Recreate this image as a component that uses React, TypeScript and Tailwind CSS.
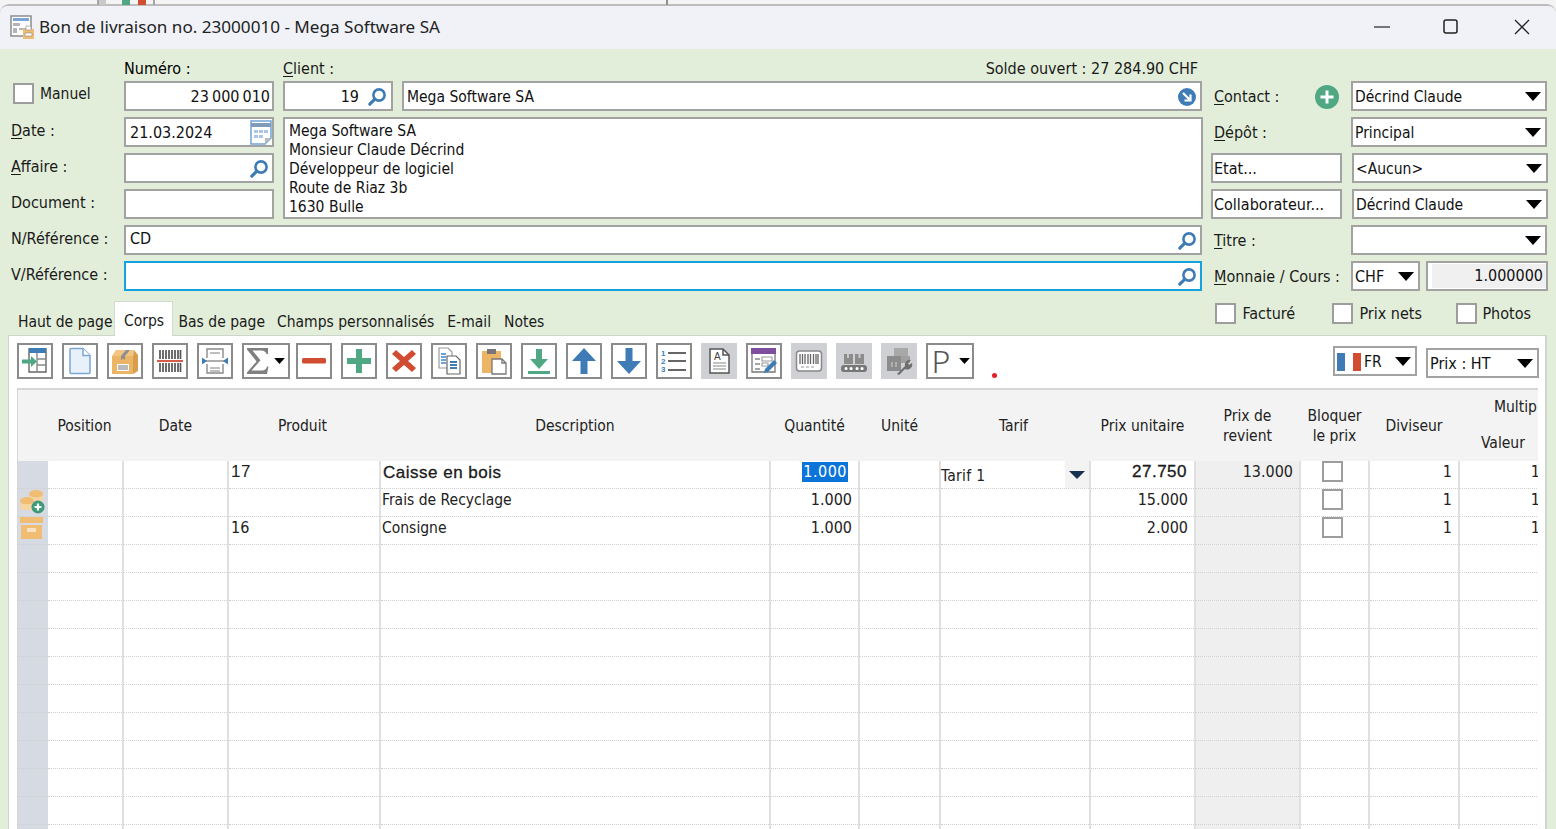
import React from 'react';

const FONT = "font-['DejaVu_Sans',sans-serif] [font-stretch:condensed]";
const PLAIN_BIG = "font-['Liberation_Sans',sans-serif] text-[17px] tracking-[0.5px]";
const STRONG = "font-['Liberation_Sans',sans-serif] text-[17px] font-medium tracking-[0.5px] [-webkit-text-stroke:0.3px_#111]";

const COLS = [75, 105, 152, 390, 89, 81, 150, 105, 105, 69, 90, 82];

// little search glass used in several fields
function Glass() {
  return (
    <svg width="20" height="20" viewBox="0 0 20 20" fill="none">
      <circle cx="12" cy="8" r="5.6" stroke="#3f7cb5" strokeWidth="2.6" fill="#fff" />
      <path d="M7.6 12.4 2.8 17.2" stroke="#3f7cb5" strokeWidth="3.2" strokeLinecap="round" />
    </svg>
  );
}

function Caret({ className = '' }: { className?: string }) {
  return (
    <svg width="16" height="9" viewBox="0 0 16 9" className={className}>
      <path d="M0 0h16L8 9z" fill="#000" />
    </svg>
  );
}

function Box({ children, className = '', focus }: { children?: React.ReactNode; className?: string; focus?: boolean }) {
  return (
    <div className={`flex h-[30px] items-center border-2 bg-white px-[4px] pt-px text-[#111] ${focus ? 'border-[#15a3e0]' : 'border-[#a2a2a2]'} ${className}`}>
      {children}
    </div>
  );
}

function Select({ value, className = '', size = 'text-[15.5px]' }: { value?: string; className?: string; size?: string }) {
  return (
    <Box className={`justify-between pl-[2px] pr-[4px] ${className}`}>
      <span className={size}>{value}</span>
      <Caret />
    </Box>
  );
}

function Label({ first, rest, className = '' }: { first?: string; rest: string; className?: string }) {
  return (
    <span className={`whitespace-nowrap text-[#1a1a1a] ${className}`}>
      {first && <u className="underline-offset-2">{first}</u>}
      {rest}
    </span>
  );
}

function Check({ label, className = '', labelClass = '' }: { label?: string; className?: string; labelClass?: string }) {
  return (
    <span className={`flex items-center gap-[5px] ${className}`}>
      <span className="h-[21px] w-[21px] shrink-0 border-2 border-[#9d9d9d] bg-white" />
      {label && <span className={`text-[#1a1a1a] ${labelClass}`}>{label}</span>}
    </span>
  );
}

function Tool({ children, wide, flat }: { children: React.ReactNode; wide?: boolean; flat?: boolean }) {
  return (
    <div
      className={`flex h-[36px] shrink-0 items-center justify-center ${wide ? 'w-[48px]' : 'w-[36px]'} ${
        flat ? 'bg-[#cfd0d3]' : 'border-2 border-[#8b8b8b] bg-white'
      }`}
    >
      {children}
    </div>
  );
}

function Ico({ children }: { children: React.ReactNode }) {
  return (
    <svg width="28" height="28" viewBox="0 0 28 28" fill="none">
      {children}
    </svg>
  );
}

function Toolbar() {
  return (
    <div className="flex items-start gap-[9px]">
      <Tool>
        <Ico>
          <path d="M8 2h17v23H8z" fill="#fff" stroke="#666" strokeWidth="1.4" />
          <path d="M8 1h17v5H8z" fill="#3f7cb5" />
          <path d="M16 6v19M16 12h9M16 18h9" stroke="#888" strokeWidth="1.4" />
          <path d="M1 12.5h9V9l6 5.5-6 5.5v-3.500H1z" fill="#4fa883" />
        </Ico>
      </Tool>
      <Tool>
        <Ico>
          <path d="M5 1.500h12l7 7v17a1 1 0 0 1-1 1H5a1 1 0 0 1-1-1v-23a1 1 0 0 1 1-1z" fill="#e8f0f9" stroke="#7ba6d3" strokeWidth="1.500" />
          <path d="M17 1.500v7h7" stroke="#7ba6d3" strokeWidth="1.500" fill="#fff" />
        </Ico>
      </Tool>
      <Tool>
        <Ico>
          <path d="M1 9 5 3h18l-1 6z" fill="#f2c583" />
          <path d="M22 9l1-6 4 5v16l-5 3z" fill="#d89d4d" />
          <path d="M1 9h21v18H1z" fill="#ecb566" />
          <path d="M10 9l5-6h4l-5 6v4l-2-1.500L10 13z" fill="#8f8f8f" />
          <path d="M6 17h12v7H6z" fill="#fff" />
          <path d="M8 18v5M10 18v5M12 18v5M14 18v5M16 18v5" stroke="#777" strokeWidth="1" />
        </Ico>
      </Tool>
      <Tool>
        <Ico>
          <path d="M4 3v22M7 3v22M10 3v22M13 3v22M16 3v22M19 3v22M22 3v22M24.500 3v22" stroke="#555" strokeWidth="1.700" />
          <path d="M1 14h26" stroke="#fff" strokeWidth="4" />
          <path d="M1 14h26" stroke="#d14d32" strokeWidth="1.800" />
        </Ico>
      </Tool>
      <Tool>
        <Ico>
          <path d="M6 11V2h16v9M6 17v9h16v-9" stroke="#8a8a8a" strokeWidth="1.400" />
          <path d="M9 6h10M9 21h10M9 24h10" stroke="#aaa" strokeWidth="1.400" />
          <path d="M3 14h22" stroke="#8a8a8a" strokeWidth="1.400" />
          <path d="M1 10.500 6 14l-5 3.500zM27 10.500 22 14l5 3.500z" fill="#3f7cb5" />
        </Ico>
      </Tool>
      <div className="mr-[-3px]">
        <Tool wide>
          <div className="flex items-center gap-[5px]">
            <svg width="22" height="26" viewBox="0 0 22 26">
              <path d="M0 0h21v6h-1.500Q18.500 2.500 14 2.500H5.500l8 9.800-9 10.200H15q4 0 5-4h1.500L20 26H0v-1.500l9.500-11L0 1.500z" fill="#808080" />
            </svg>
            <Caret className="h-[6px] w-[11px]" />
          </div>
        </Tool>
      </div>
      <Tool>
        <Ico>
          <rect x="2" y="11" width="24" height="5.500" rx="1.500" fill="#d14d32" />
        </Ico>
      </Tool>
      <Tool>
        <Ico>
          <path d="M11 2h6v9h9v6h-9v9h-6v-9H2v-6h9z" fill="#4fa883" strokeLinejoin="round" />
        </Ico>
      </Tool>
      <Tool>
        <Ico>
          <path d="M6 3l8 7 8-7 4 4-8 7 8 7-4 4-8-7-8 7-4-4 8-7-8-7z" fill="#d14d32" />
        </Ico>
      </Tool>
      <Tool>
        <Ico>
          <path d="M4 1h9l4 4v16H4z" fill="#fff" stroke="#999" strokeWidth="1.200" />
          <path d="M6 7h5M6 10h5M6 13h5M6 16h5" stroke="#6fa3d6" strokeWidth="1.800" />
          <path d="M12 9h9l4 4v14H12z" fill="#fff" stroke="#666" strokeWidth="1.200" />
          <path d="M15 15h7M15 18h7M15 21h7" stroke="#3f7cb5" strokeWidth="1.800" />
        </Ico>
      </Tool>
      <Tool>
        <Ico>
          <path d="M2 4h19v22H2z" fill="#ecb566" />
          <path d="M7 2h9v5H7z" fill="#777" />
          <path d="M12 12h10l4 4v11H12z" fill="#fff" stroke="#777" strokeWidth="1.300" />
          <path d="M22 12v4h4" stroke="#777" strokeWidth="1.300" />
        </Ico>
      </Tool>
      <Tool>
        <Ico>
          <path d="M11 2h6v10h6l-9 10-9-10h6z" fill="#4fa883" />
          <path d="M3 24h22v3H3z" fill="#4fa883" />
        </Ico>
      </Tool>
      <Tool>
        <Ico>
          <path d="M14 1l12 13h-8.500v13h-7V14H2z" fill="#3f7cb5" />
        </Ico>
      </Tool>
      <Tool>
        <Ico>
          <path d="M14 27 2 14h8.500V1h7v13H26z" fill="#3f7cb5" />
        </Ico>
      </Tool>
      <Tool>
        <Ico>
          <text x="1" y="9" fontSize="8" fontWeight="700" fill="#3f7cb5" fontFamily="Liberation Sans, sans-serif">1</text>
          <text x="1" y="17" fontSize="8" fontWeight="700" fill="#3f7cb5" fontFamily="Liberation Sans, sans-serif">2</text>
          <text x="1" y="25" fontSize="8" fontWeight="700" fill="#3f7cb5" fontFamily="Liberation Sans, sans-serif">3</text>
          <path d="M8 6h18M8 14h18M8 23h18" stroke="#666" strokeWidth="1.800" />
        </Ico>
      </Tool>
      <Tool flat>
        <Ico>
          <path d="M5 2h13l6 6v18H5z" fill="#fff" stroke="#555" strokeWidth="1.500" />
          <path d="M18 2v6h6" stroke="#555" strokeWidth="1.500" />
          <text x="9" y="13" fontSize="10" fill="#444" fontFamily="Liberation Sans, sans-serif">A</text>
          <path d="M8 16h13M8 19h13M8 22h13" stroke="#888" strokeWidth="1.100" />
        </Ico>
      </Tool>
      <Tool>
        <Ico>
          <path d="M2 2h23v23H2z" fill="#fff" stroke="#777" strokeWidth="1.300" />
          <path d="M1 1h25v6H1z" fill="#7f4d9e" />
          <path d="M5 12h5M5 17h5M5 22h5" stroke="#888" strokeWidth="1.400" />
          <path d="M12 10h10v4H12zM12 16h6v3h-6z" stroke="#999" strokeWidth="1.100" />
          <path d="M14 26l1-4 9-9 3 3-9 9z" fill="#3f7cb5" />
        </Ico>
      </Tool>
      <Tool flat>
        <Ico>
          <rect x="1.500" y="4" width="25" height="20" rx="3" fill="#fff" stroke="#888" strokeWidth="1.500" />
          <path d="M5 7v10M7.500 7v10M10 7v10M13 7v10M15.500 7v10M18.500 7v10M21 7v10M23 7v10" stroke="#666" strokeWidth="1.300" />
          <path d="M6 20h3M11 20h3M16 20h3" stroke="#999" strokeWidth="1.200" />
        </Ico>
      </Tool>
      <Tool flat>
        <Ico>
          <path d="M4 7h9v10H4zM15 7h9v10h-9z" fill="#8c8c8c" />
          <path d="M7 7h2v4H7zM18.500 7h2v4h-2z" fill="#c9c9c9" />
          <rect x="1" y="18" width="26" height="7" rx="3" fill="#777" />
          <path d="M6 21.500h.1M11 21.500h.1M17 21.500h.1M22 21.500h.1" stroke="#fff" strokeWidth="3" strokeLinecap="round" />
        </Ico>
      </Tool>
      <Tool flat>
        <Ico>
          <path d="M9 1h14v10H9z" fill="#a8a8a8" />
          <path d="M2 9h14v15H2z" fill="#8c8c8c" />
          <path d="M16 9h9v7H16z" fill="#a0a0a0" />
          <path d="M7 15v5M11 15v5" stroke="#c9c9c9" strokeWidth="1.200" />
          <path d="M12 27l8-8a5 5 0 0 1 6-6l-3 3 1 2 3-2a5 5 0 0 1-7 6l-6 6z" fill="#6e6e6e" />
        </Ico>
      </Tool>
      <Tool wide>
        <div className="flex items-center gap-[9px] pl-[2px]">
          <span className="font-['Noto_Sans',sans-serif] text-[32px] leading-none font-light text-[#555]">P</span>
          <Caret className="h-[6px] w-[11px]" />
        </div>
      </Tool>
    </div>
  );
}

const ROWS = [
  { produit: '17', desc: 'Caisse en bois', qty: '1.000', prix: '27.750', revient: '13.000', main: true },
  { produit: '', desc: 'Frais de Recyclage', qty: '1.000', prix: '15.000', icon: 'coins' },
  { produit: '16', desc: 'Consigne', qty: '1.000', prix: '2.000', icon: 'box' },
];

function Coins() {
  return (
    <svg width="26" height="26" viewBox="0 0 26 26">
      <ellipse cx="17" cy="5" rx="7" ry="4" fill="#f0bd72" />
      <path d="M10 6v5c0 2 14 2 14 0V6c0 3-14 3-14 0z" fill="#f4d5a3" />
      <ellipse cx="8" cy="12" rx="7" ry="4" fill="#f0bd72" />
      <path d="M1 13v6c0 3 14 3 14 0v-6c0 3-14 3-14 0z" fill="#f4d5a3" />
      <circle cx="19" cy="18" r="6.500" fill="#3f9a78" />
      <path d="M19 14.500v7M15.500 18h7" stroke="#fff" strokeWidth="2.200" />
    </svg>
  );
}

function Carton() {
  return (
    <svg width="24" height="22" viewBox="0 0 24 22">
      <path d="M0 0h23v6H0z" fill="#f0bd72" />
      <path d="M1 8h21v14H1z" fill="#f0bd72" />
      <path d="M7 11h9v4H7z" fill="#f7e3c4" />
    </svg>
  );
}

function Grid() {
  const blanks = Array.from({ length: 11 });
  return (
    <div className="mt-[9px] ml-[8px] h-[442px] w-[1521px] overflow-hidden border-t-2 border-l border-[#d6d6d6] bg-white">
      <table className="w-[1523px] table-fixed border-collapse text-[15.5px] text-[#222]">
        <colgroup>
          <col className="w-[30px]" />
          {COLS.map((w, i) => (
            <col key={i} style={{ width: w }} />
          ))}
        </colgroup>
        <thead>
          <tr className="h-[71px] bg-[#f3f3f3] text-center align-middle font-normal">
            <th className="font-normal" />
            <th className="pr-[2px] font-normal">Position</th>
            <th className="font-normal">Date</th>
            <th className="pr-[3px] font-normal">Produit</th>
            <th className="font-normal">Description</th>
            <th className="font-normal">Quantité</th>
            <th className="font-normal">Unité</th>
            <th className="pr-[3px] font-normal">Tarif</th>
            <th className="font-normal">Prix unitaire</th>
            <th className="font-normal leading-[20px]">Prix de<br />revient</th>
            <th className="font-normal leading-[20px]">Bloquer<br />le prix</th>
            <th className="font-normal">Diviseur</th>
            <th className="pl-[22px] text-left align-top font-normal">
              <div className="mt-[7px] pl-[13px] leading-[20px]">Multip</div>
              <div className="mt-[16px] leading-[20px]">Valeur</div>
            </th>
          </tr>
        </thead>
        <tbody>
          {ROWS.map((r) => (
            <tr key={r.desc} className={`${r.main ? 'h-[27px]' : 'h-[28px]'} border-b border-dotted border-[#cfcfcf] align-top`}>
              <td className="bg-[#d6dbe3] p-0">
                <div className="flex justify-center pr-[3px]">
                  {r.icon === 'coins' && <Coins />}
                  {r.icon === 'box' && <Carton />}
                </div>
              </td>
              <td className="border-r-2 border-[#e0e0e0]" />
              <td className="border-r-2 border-[#e0e0e0]" />
              <td className={`border-r-2 border-[#e0e0e0] pt-px pl-[2px] text-[16px] ${r.main ? PLAIN_BIG : ''}`}>{r.produit}</td>
              <td className={`border-r-2 border-[#e0e0e0] ${r.main ? `pt-[2px] pl-[2px] ${STRONG}` : 'pt-px pl-px'}`}>{r.desc}</td>
              <td className="border-r-2 border-[#e0e0e0] pt-px pr-[6px] text-right text-[16px]">
                {r.main ? <span className="mr-[4px] inline-block w-[46px] bg-[#0a74d8] pr-px tracking-[0.5px] text-white">{r.qty}</span> : r.qty}
              </td>
              <td className="border-r-2 border-[#e0e0e0]" />
              <td className="border-r-2 border-[#e0e0e0] p-0">
                {r.main && (
                  <div className="flex h-[27px] items-center justify-between pt-[3px] tracking-[0.3px]">
                    <span>Tarif 1</span>
                    <span className="-mt-[3px] flex h-[27px] w-[24px] items-center justify-center bg-[#f3f3f3]">
                      <svg width="16" height="8" viewBox="0 0 16 8"><path d="M0 0h16L8 8z" fill="#16304f" /></svg>
                    </span>
                  </div>
                )}
              </td>
              <td className={`border-r-2 border-[#e0e0e0] pt-px text-right text-[16px] ${r.main ? `pr-[7px] ${STRONG}` : 'pr-[6px]'}`}>{r.prix}</td>
              <td className="border-r-2 border-[#e0e0e0] bg-[#efefef] pt-px pr-[6px] text-right text-[16px]">{r.revient}</td>
              <td className="border-r-2 border-[#e0e0e0] p-0">
                <div className="flex justify-center pr-[5px]"><Check /></div>
              </td>
              <td className="border-r-2 border-[#e0e0e0] pt-px pr-[6px] text-right text-[16px]">1</td>
              <td className="pt-px pr-px text-right text-[16px]">1</td>
            </tr>
          ))}
          {blanks.map((_, i) => (
            <tr key={i} className="h-[28px] border-b border-dotted border-[#cfcfcf]">
              <td className="bg-[#d6dbe3]" />
              {COLS.map((w, j) => (
                <td key={j} className={`${j === 11 ? '' : 'border-r-2 border-[#e0e0e0]'} ${j === 8 ? 'bg-[#efefef]' : ''}`} />
              ))}
            </tr>
          ))}
        </tbody>
      </table>
    </div>
  );
}

export default function App() {
  return (
    <div className={`h-[829px] w-[1556px] overflow-hidden bg-[#f4f4f4] text-[16px] leading-[20px] ${FONT}`}>
      {/* bit of the window behind */}
      <div className="flex h-[5px] pl-[97px]">
        <div className="flex h-full w-[58px] items-stretch border-x-2 border-[#a5a5a5]">
          <span className="h-full w-[7px] bg-[#c9c9c9]" />
          <span className="ml-[16px] h-full w-[8px] bg-[#4fa883]" />
          <span className="ml-[8px] h-full w-[8px] bg-[#d14d32]" />
        </div>
        <div className="ml-[511px] h-full w-[2px] bg-[#8f8f8f]" />
      </div>

      <div className="-mt-px h-[825px] rounded-t-[9px] border-t-2 border-[#bdbdbd] bg-[#e2eed9]">
        {/* title bar */}
        <div className="flex h-[43px] items-center rounded-t-[8px] bg-[#f0f2f8] pl-[10px]">
          <svg width="25" height="25" viewBox="0 0 25 25">
            <path d="M1 1h20v20H1z" fill="#fff" stroke="#8c8c8c" strokeWidth="1.500" />
            <path d="M3 3h16v3H3z" fill="#7ba6d3" />
            <path d="M3 8h7v3H3zM3 13h4v5H3zM9 13h8v2H9z" fill="#b5b5b5" />
            <path d="M13 14h11v10H13z" fill="#f0bd72" />
            <path d="M16 11h5v4h-5zM15 18h7v3h-7z" fill="#fff" stroke="#888" strokeWidth=".6" />
          </svg>
          <span className="mb-[2px] ml-[4px] font-['Noto_Sans',sans-serif] text-[17.1px] [font-stretch:normal] text-[#222]">
            Bon de livraison no. 23000010 - Mega Software SA
          </span>
          <div className="ml-auto flex items-center">
            <svg width="16" height="2" viewBox="0 0 16 2" className="mr-[53px] mb-[2px]"><path d="M0 1h16" stroke="#222" strokeWidth="1.200" /></svg>
            <svg width="15" height="15" viewBox="0 0 15 15" className="mr-[56px] mb-[2px]"><rect x="1" y="1" width="13" height="13" rx="2" fill="none" stroke="#222" strokeWidth="1.500" /></svg>
            <svg width="16" height="16" viewBox="0 0 16 16" className="mr-[26px] mb-[2px]"><path d="M1 1l14 14M15 1 1 15" stroke="#222" strokeWidth="1.300" /></svg>
          </div>
        </div>

        {/* header form */}
        <div className="flex h-[32px] items-start pt-[9px] pl-[124px]">
          <span className="mt-px w-[159px]">Numéro :</span>
          <Label first="C" rest="lient :" className="mt-px" />
          <span className="mt-px mr-[358px] ml-auto text-[#1a1a1a]">Solde ouvert : 27 284.90 CHF</span>
        </div>
        <div className="grid grid-cols-[124px_150px_9px_110px_9px_800px_9px_131px_9px_196px] grid-rows-[repeat(6,30px)] gap-y-[6px]">
          <div className="col-start-1 row-start-1 pl-[13px]"><Check label="Manuel" className="mt-px gap-[6px]" labelClass="mt-[2px] text-[15.5px]" /></div>
          <Box className="col-start-2 row-start-1 justify-end pr-[2px] [word-spacing:-1.5px]">23 000 010</Box>
          <Box className="col-start-4 row-start-1 justify-between pr-[4px]">
            <span className="mr-[8px] ml-auto">19</span>
            <Glass />
          </Box>
          <Box className="col-start-6 row-start-1 justify-between pr-[4px] pl-[3px] text-[15.5px]">
            Mega Software SA
            <svg width="18" height="18" viewBox="0 0 18 18">
              <circle cx="9" cy="9" r="9" fill="#3f7cb5" />
              <path d="M5 5l7 7M12.500 6.500v6h-6" stroke="#fff" strokeWidth="2.200" fill="none" />
            </svg>
          </Box>
          <div className="col-start-8 col-end-10 row-start-1 flex items-center justify-between pt-px pr-[12px] pl-[3px]">
            <Label first="C" rest="ontact :" />
            <svg width="24" height="24" viewBox="0 0 24 24">
              <circle cx="12" cy="12" r="12" fill="#4fa883" />
              <path d="M12 5.500v13M5.500 12h13" stroke="#fff" strokeWidth="3" />
            </svg>
          </div>
          <Select value="Décrind Claude" className="col-start-10 row-start-1" />

          <div className="col-start-1 row-start-2 flex items-start pt-[4px] pl-[11px]"><Label first="D" rest="ate :" /></div>
          <Box className="col-start-2 row-start-2 justify-between pr-0">
            21.03.2024
            <svg width="22" height="25" viewBox="0 0 22 25">
              <path d="M1 1h20v17l-6 6H1z" fill="#fff" stroke="#6fa3d6" strokeWidth="1.500" />
              <path d="M1 3h20v4H1z" fill="#7f9bb8" />
              <path d="M4 10h4v3H4zM9 10h4v3H9zM14 10h4v3h-4zM4 15h4v3H4zM9 15h4v3H9z" fill="#a9c7e6" />
              <path d="M15 24v-6h6z" fill="#bbb" />
            </svg>
          </Box>
          <div className="col-start-4 col-end-7 row-start-2 row-end-5 -mr-px border-2 border-[#a2a2a2] bg-white pt-[3px] pl-[4px] text-[15.5px] leading-[19px] text-[#111]">
            Mega Software SA
            <br />
            Monsieur Claude Décrind
            <br />
            Développeur de logiciel
            <br />
            Route de Riaz 3b
            <br />
            1630 Bulle
          </div>
          <div className="col-start-8 col-end-10 row-start-2 flex items-center pt-px pl-[3px]"><Label first="D" rest="épôt :" /></div>
          <Select value="Principal" className="col-start-10 row-start-2" />

          <div className="col-start-1 row-start-3 flex items-start pt-[4px] pl-[11px]"><Label first="A" rest="ffaire :" /></div>
          <Box className="col-start-2 row-start-3 justify-end pr-[3px]"><Glass /></Box>
          <Box className="col-start-8 row-start-3 pl-px">Etat...</Box>
          <Select value="<Aucun>" className="col-start-10 row-start-3 -mr-px ml-px" />

          <div className="col-start-1 row-start-4 flex items-start pt-[4px] pl-[11px]"><Label rest="Document :" /></div>
          <Box className="col-start-2 row-start-4" />
          <Box className="col-start-8 row-start-4 pl-px">Collaborateur...</Box>
          <Select value="Décrind Claude" className="col-start-10 row-start-4 -mr-px ml-px" />

          <div className="col-start-1 row-start-5 flex items-start pt-[4px] pl-[11px]"><Label rest="N/Référence :" /></div>
          <Box className="col-start-2 col-end-7 row-start-5 justify-between pr-[3px]"><span className="mb-[3px]">CD</span><Glass /></Box>
          <div className="col-start-8 col-end-10 row-start-5 flex items-center pt-px pl-[3px]"><Label first="T" rest="itre :" /></div>
          <Select className="col-start-10 row-start-5" />

          <div className="col-start-1 row-start-6 flex items-start pt-[4px] pl-[11px]"><Label rest="V/Référence :" /></div>
          <Box focus className="col-start-2 col-end-7 row-start-6 justify-end pr-[3px]"><Glass /></Box>
          <div className="col-start-8 col-end-10 row-start-6 flex items-center pt-px pl-[3px]"><Label first="M" rest="onnaie / Cours :" /></div>
          <div className="col-start-10 row-start-6 -mr-px flex justify-between">
            <Select value="CHF" className="w-[69px]" size="text-[16px]" />
            <Box className="w-[122px] justify-end p-px pr-0">
              <div className="flex h-full w-full items-center justify-end bg-[#f0f0f0] pr-[3px]">1.000000</div>
            </Box>
          </div>
        </div>

        {/* tabs */}
        <div className="flex h-[44px] items-end pl-[18px] text-[15.5px]">
          <span className="mb-[3px] text-[#1a1a1a]">Haut de page</span>
          <span className="relative z-10 mb-[-1px] ml-[2px] flex h-[35px] w-[59px] items-center justify-center border-x border-t border-[#d3dbd0] bg-white pt-[4px] text-[#1a1a1a]">Corps</span>
          <span className="mb-[3px] ml-[5px] text-[#1a1a1a]">Bas de page</span>
          <span className="mb-[3px] ml-[12px] text-[#1a1a1a]">Champs personnalisés</span>
          <span className="mb-[3px] ml-[13px] text-[#1a1a1a]">E-mail</span>
          <span className="mb-[3px] ml-[13px] text-[#1a1a1a]">Notes</span>
          <div className="mb-[11px] ml-auto flex pr-[25px] text-[16px]">
            <Check label="Facturé" className="w-[117px]" labelClass="ml-px" />
            <Check label="Prix nets" className="w-[124px]" labelClass="ml-px" />
            <Check label="Photos" />
          </div>
        </div>

        {/* body panel */}
        <div className="ml-[8px] h-[500px] w-[1539px] border-t border-r-2 border-l border-[#cdd6ca] bg-white pt-[7px]">
          <div className="flex items-start pl-[8px]">
            <Toolbar />
            <span className="mt-[30px] ml-[18px] h-[5px] w-[5px] rounded-full bg-[#e81c24]" />
            <div className="ml-auto flex items-start gap-[9px] pr-[6px]">
              <Box className="mt-[3px] w-[84px] justify-between pr-[4px] pl-[2px]">
                <span className="flex items-center">
                  <span className="h-[18px] w-[8px] bg-[#3f7cb5]" />
                  <span className="h-[18px] w-[8px] bg-white" />
                  <span className="h-[18px] w-[8px] bg-[#d14d32]" />
                  <span className="ml-[3px] text-[15.5px]">FR</span>
                </span>
                <Caret />
              </Box>
              <Select value="Prix : HT" className="mt-[5px] w-[113px]" size="text-[16px]" />
            </div>
          </div>
          <Grid />
        </div>
      </div>
    </div>
  );
}
